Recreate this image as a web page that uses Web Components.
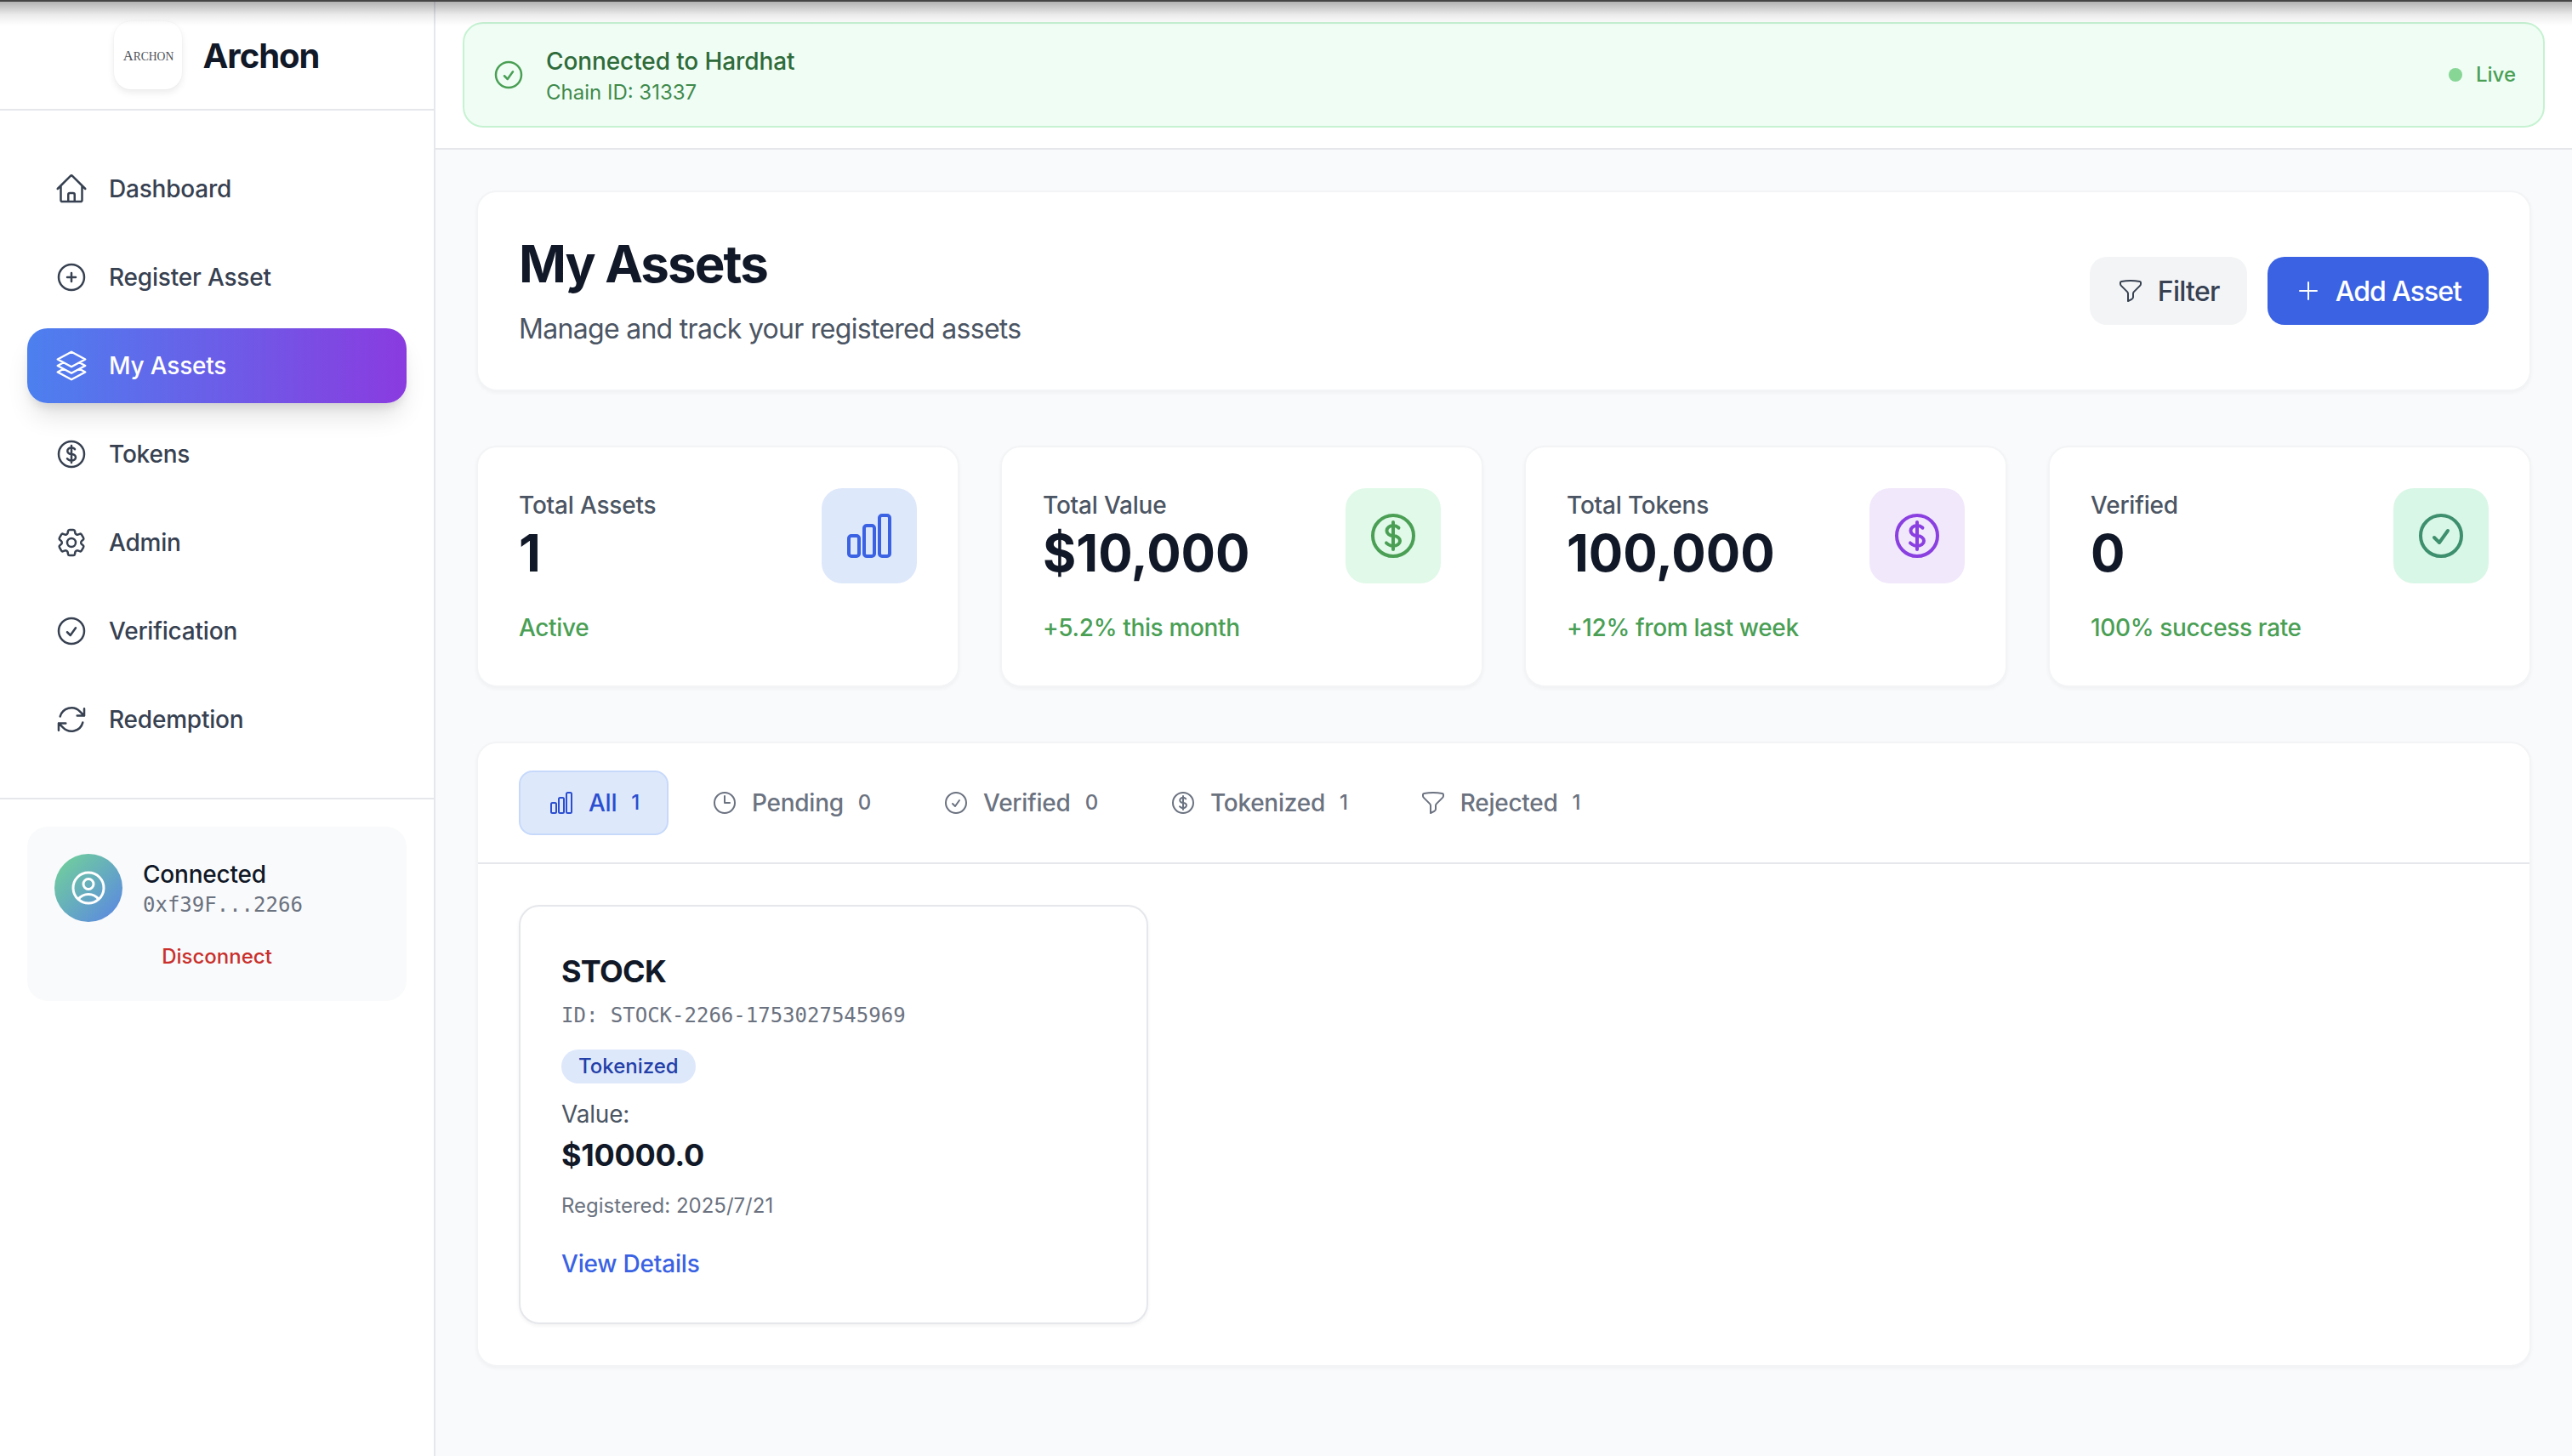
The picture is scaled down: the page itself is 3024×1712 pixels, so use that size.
<!DOCTYPE html>
<html lang="en">
<head>
<meta charset="utf-8">
<title>Archon - My Assets</title>
<style>
  html, body { margin: 0; height: 100%; }
  body {
    background: #f9fafb;
    color: #111827;
    font-family: Inter, "Liberation Sans", sans-serif;
    overflow: hidden;
  }
</style>
</head>
<body>
<app-shell>
  <side-bar slot="side">
    <nav-item icon="home">Dashboard</nav-item>
    <nav-item icon="plusCircle">Register Asset</nav-item>
    <nav-item icon="stack" active>My Assets</nav-item>
    <nav-item icon="dollar">Tokens</nav-item>
    <nav-item icon="cog">Admin</nav-item>
    <nav-item icon="check">Verification</nav-item>
    <nav-item icon="refresh">Redemption</nav-item>
    <wallet-card slot="footer" address="0xf39F...2266"></wallet-card>
  </side-bar>

  <network-banner slot="top" name="Connected to Hardhat" chain="Chain ID: 31337"></network-banner>

  <page-header title-text="My Assets" subtitle="Manage and track your registered assets">
    <action-button icon="funnel">Filter</action-button>
    <action-button icon="plus" primary>Add Asset</action-button>
  </page-header>

  <stat-grid>
    <stat-card label="Total Assets" value="1" note="Active" icon="chart" tint="#dee8fb" ink="#3a62e3"></stat-card>
    <stat-card label="Total Value" value="$10,000" note="+5.2% this month" icon="dollar" tint="#e1f9e8" ink="#4a9f55"></stat-card>
    <stat-card label="Total Tokens" value="100,000" note="+12% from last week" icon="dollar" tint="#f1e8fc" ink="#8a3fe0"></stat-card>
    <stat-card label="Verified" value="0" note="100% success rate" icon="check" tint="#d9f7e6" ink="#3d8f6d"></stat-card>
  </stat-grid>

  <asset-panel>
    <tab-item slot="tabs" icon="chart" count="1" active>All</tab-item>
    <tab-item slot="tabs" icon="clock" count="0">Pending</tab-item>
    <tab-item slot="tabs" icon="check" count="0">Verified</tab-item>
    <tab-item slot="tabs" icon="dollar" count="1">Tokenized</tab-item>
    <tab-item slot="tabs" icon="funnel" count="1">Rejected</tab-item>
    <asset-card type="STOCK" asset-id="ID: STOCK-2266-1753027545969" status="Tokenized" value="$10000.0" registered="Registered: 2025/7/21"></asset-card>
  </asset-panel>
</app-shell>

<script>
const ICONS = {
  home: "m2.25 12 8.954-8.955c.44-.439 1.152-.439 1.591 0L21.75 12M4.5 9.75v10.125c0 .621.504 1.125 1.125 1.125H9.75v-4.875c0-.621.504-1.125 1.125-1.125h2.25c.621 0 1.125.504 1.125 1.125V21h4.125c.621 0 1.125-.504 1.125-1.125V9.75M8.25 21h8.25",
  plusCircle: "M12 9v6m3-3H9m12 0a9 9 0 1 1-18 0 9 9 0 0 1 18 0Z",
  stack: "M6.429 9.75 2.25 12l4.179 2.25m0-4.5 5.571 3 5.571-3m-11.142 0L2.25 7.5 12 2.25l9.75 5.25-4.179 2.25m0 0L21.75 12l-4.179 2.25m0 0 4.179 2.25L12 21.75 2.25 16.5l4.179-2.25m11.142 0-5.571 3-5.571-3",
  dollar: "M12 6v12m-3-2.818.879.659c1.171.879 3.07.879 4.242 0 1.172-.879 1.172-2.303 0-3.182C13.536 12.219 12.768 12 12 12c-.725 0-1.45-.22-2.003-.659-1.106-.879-1.106-2.303 0-3.182s2.9-.879 4.006 0l.415.33M21 12a9 9 0 1 1-18 0 9 9 0 0 1 18 0Z",
  cog: "M9.594 3.94c.09-.542.56-.94 1.11-.94h2.593c.55 0 1.02.398 1.11.94l.213 1.281c.063.374.313.686.645.87.074.04.147.083.22.127.325.196.72.257 1.075.124l1.217-.456a1.125 1.125 0 0 1 1.37.49l1.296 2.247a1.125 1.125 0 0 1-.26 1.431l-1.003.827c-.293.241-.438.613-.43.992a7.723 7.723 0 0 1 0 .255c-.008.378.137.75.43.991l1.004.827c.424.35.534.955.26 1.43l-1.298 2.247a1.125 1.125 0 0 1-1.369.491l-1.217-.456c-.355-.133-.75-.072-1.076.124a6.47 6.47 0 0 1-.22.128c-.331.183-.581.495-.644.869l-.213 1.281c-.09.543-.56.94-1.11.94h-2.594c-.55 0-1.019-.398-1.11-.94l-.213-1.281c-.062-.374-.312-.686-.644-.87a6.52 6.52 0 0 1-.22-.127c-.325-.196-.72-.257-1.076-.124l-1.217.456a1.125 1.125 0 0 1-1.369-.49l-1.297-2.247a1.125 1.125 0 0 1 .26-1.431l1.004-.827c.292-.24.437-.613.43-.991a6.932 6.932 0 0 1 0-.255c.007-.38-.138-.751-.43-.992l-1.004-.827a1.125 1.125 0 0 1-.26-1.43l1.297-2.247a1.125 1.125 0 0 1 1.37-.491l1.216.456c.356.133.751.072 1.076-.124.072-.044.146-.086.22-.128.332-.183.582-.495.644-.869l.214-1.28ZM15 12a3 3 0 1 1-6 0 3 3 0 0 1 6 0Z",
  check: "M9 12.75 11.25 15 15 9.75M21 12a9 9 0 1 1-18 0 9 9 0 0 1 18 0Z",
  refresh: "M16.023 9.348h4.992v-.001M2.985 19.644v-4.992m0 0h4.992m-4.993 0 3.181 3.183a8.25 8.25 0 0 0 13.803-3.7M4.031 9.865a8.25 8.25 0 0 1 13.803-3.7l3.181 3.182m0-4.991v4.99",
  chart: "M3 13.125C3 12.504 3.504 12 4.125 12h2.25c.621 0 1.125.504 1.125 1.125v6.75C7.5 20.496 6.996 21 6.375 21h-2.25A1.125 1.125 0 0 1 3 19.875v-6.75ZM9.75 8.625c0-.621.504-1.125 1.125-1.125h2.25c.621 0 1.125.504 1.125 1.125v11.25c0 .621-.504 1.125-1.125 1.125h-2.25a1.125 1.125 0 0 1-1.125-1.125V8.625ZM16.5 4.125c0-.621.504-1.125 1.125-1.125h2.25C20.496 3 21 3.504 21 4.125v15.75c0 .621-.504 1.125-1.125 1.125h-2.25a1.125 1.125 0 0 1-1.125-1.125V4.125Z",
  clock: "M12 6v6h4.5m4.5 0a9 9 0 1 1-18 0 9 9 0 0 1 18 0Z",
  funnel: "M12 3c2.755 0 5.455.232 8.083.678.533.09.917.556.917 1.096v1.044a2.25 2.25 0 0 1-.659 1.591l-5.432 5.432a2.25 2.25 0 0 0-.659 1.591v2.927a2.25 2.25 0 0 1-1.244 2.013L9.75 21v-6.568a2.25 2.25 0 0 0-.659-1.591L3.659 7.409A2.25 2.25 0 0 1 3 5.818V4.774c0-.54.384-1.006.917-1.096A48.32 48.32 0 0 1 12 3Z",
  plus: "M12 4.5v15m7.5-7.5h-15",
  user: "M17.982 18.725A7.488 7.488 0 0 0 12 15.75a7.488 7.488 0 0 0-5.982 2.975m11.963 0a9 9 0 1 0-11.963 0m11.963 0A8.966 8.966 0 0 1 12 21a8.966 8.966 0 0 1-5.982-2.275M15 9.75a3 3 0 1 1-6 0 3 3 0 0 1 6 0Z"
};

const CARD_STYLE = `
  background: white;
  border: 2px solid #f3f4f6;
  border-radius: 24px;
  box-shadow: 0 2px 4px rgba(0, 0, 0, 0.04);
  box-sizing: border-box;
`;

// small helper, every element below does the same three lines
function define(name, html) {
  customElements.define(name, class extends HTMLElement {
    connectedCallback() {
      if (this.shadowRoot) return;
      const attrs = (key) => this.getAttribute(key) || "";
      this.attachShadow({ mode: "open" }).innerHTML = typeof html === "function" ? html(attrs) : html;
    }
  });
}

define("hero-icon", (a) => `
  <style>
    :host { display: block; flex: none; width: ${a("size") || 40}px; height: ${a("size") || 40}px; }
    svg { display: block; width: 100%; height: 100%; }
  </style>
  <svg viewBox="0 0 24 24" fill="none" stroke="currentColor" stroke-width="1.5" stroke-linecap="round" stroke-linejoin="round">
    <path d="${ICONS[a("name")]}"></path>
  </svg>
`);

define("app-shell", `
  <style>
    :host { display: block; position: relative; height: 100vh; background: #f9fafb; }
    .edge { height: 2px; background: #444; }
    .frame { display: grid; grid-template-columns: 512px 1fr; height: calc(100% - 2px); }
    .topbar { background: white; border-bottom: 2px solid #e5e7eb; padding: 24px 32px; }
    main { padding: 48px; display: flex; flex-direction: column; gap: 64px; min-width: 0; }
    .shade {
      position: absolute; left: 0; right: 0; top: 2px; height: 28px; pointer-events: none;
      background: linear-gradient(to bottom, rgba(0, 0, 0, 0.3), rgba(0, 0, 0, 0.08) 55%, rgba(0, 0, 0, 0));
    }
  </style>
  <div class="edge"></div>
  <div class="frame">
    <slot name="side"></slot>
    <div>
      <div class="topbar"><slot name="top"></slot></div>
      <main><slot></slot></main>
    </div>
  </div>
  <div class="shade"></div>
`);

define("side-bar", `
  <style>
    :host { display: block; background: white; border-right: 2px solid #e5e7eb; box-sizing: border-box; }
    header {
      display: flex; align-items: center; justify-content: center; gap: 24px;
      height: 128px; box-sizing: border-box; border-bottom: 2px solid #e5e7eb;
    }
    .logo {
      width: 80px; height: 80px; border-radius: 20px; background: white;
      box-shadow: 0 4px 8px rgba(0, 0, 0, 0.08), 0 0 2px rgba(0, 0, 0, 0.05);
      display: flex; align-items: baseline; justify-content: center; box-sizing: border-box; padding-top: 31px;
      font: 13.6px/20px "Liberation Serif", serif; color: #4f5359;
    }
    .logo b { font-size: 16.6px; font-weight: 400; }
    h1 { margin: 0; font-size: 40px; font-weight: 700; letter-spacing: -1px; color: #111827; }
    nav { display: flex; flex-direction: column; gap: 16px; padding: 48px 32px; }
    footer { border-top: 2px solid #e5e7eb; padding: 32px; }
  </style>
  <header><div class="logo"><b>A</b>RCHON</div><h1>Archon</h1></header>
  <nav><slot></slot></nav>
  <footer><slot name="footer"></slot></footer>
`);

define("nav-item", (a) => `
  <style>
    :host {
      display: flex; align-items: center; gap: 24px; height: 88px; padding: 0 32px;
      box-sizing: border-box; border-radius: 24px; color: #374151;
      font-size: 28px; font-weight: 500; line-height: 40px; letter-spacing: -0.2px;
    }
    :host([active]) {
      color: white;
      background: linear-gradient(to right, #4c80ef, #8a3be0);
      box-shadow: 0 20px 30px -6px rgba(0, 0, 0, 0.12), 0 8px 12px -4px rgba(0, 0, 0, 0.1);
    }
  </style>
  <hero-icon name="${a("icon")}" size="40"></hero-icon>
  <slot></slot>
`);

define("wallet-card", (a) => `
  <style>
    :host { display: block; background: #f9fafb; border-radius: 24px; padding: 32px 32px 36px; }
    .row { display: flex; align-items: center; gap: 24px; }
    .avatar {
      width: 80px; height: 80px; border-radius: 50%; color: white;
      background: linear-gradient(135deg, #72d596, #5a84e6);
      display: flex; align-items: center; justify-content: center;
    }
    .who { font-size: 28px; font-weight: 500; line-height: 40px; color: #111827; letter-spacing: -0.2px; }
    .addr { font: 24px/32px "DejaVu Sans Mono", monospace; color: #6b7280; }
    .out { margin-top: 25px; text-align: center; font-size: 24px; font-weight: 500; line-height: 32px; color: #c9302c; }
  </style>
  <div class="row">
    <div class="avatar"><hero-icon name="user" size="48"></hero-icon></div>
    <div><div class="who">Connected</div><div class="addr">${a("address")}</div></div>
  </div>
  <div class="out">Disconnect</div>
`);

define("network-banner", (a) => `
  <style>
    :host {
      display: flex; align-items: center; gap: 24px; padding: 24px 32px;
      background: #f0fdf4; border: 2px solid #c6f2d2; border-radius: 24px; box-sizing: border-box;
      color: #4a9f55;
    }
    .text { flex: 1; }
    .name { font-size: 28px; font-weight: 500; line-height: 40px; color: #2f6b3a; letter-spacing: -0.1px; }
    .chain { font-size: 24px; line-height: 32px; padding-top: 1px; margin-bottom: -1px; color: #3f8a4c; }
    .live { display: flex; align-items: center; gap: 16px; font-size: 24px; font-weight: 500; line-height: 32px; }
    .dot { width: 16px; height: 16px; border-radius: 50%; background: #87d696; }
  </style>
  <hero-icon name="check" size="40"></hero-icon>
  <div class="text"><div class="name">${a("name")}</div><div class="chain">${a("chain")}</div></div>
  <div class="live"><span class="dot"></span>Live</div>
`);

define("page-header", (a) => `
  <style>
    :host { ${CARD_STYLE} display: flex; align-items: center; justify-content: space-between; padding: 48px; }
    h2 { margin: 0; font-size: 60px; line-height: 72px; font-weight: 700; color: #111827; letter-spacing: -1.9px; }
    p { margin: 17px 0 0; font-size: 32px; line-height: 47px; color: #4b5563; letter-spacing: -0.7px; }
    .actions { display: flex; gap: 24px; }
  </style>
  <div><h2>${a("title-text")}</h2><p>${a("subtitle")}</p></div>
  <div class="actions"><slot></slot></div>
`);

define("action-button", (a) => `
  <style>
    :host {
      display: flex; align-items: center; gap: 16px; height: 80px; padding: 0 32px;
      box-sizing: border-box; border-radius: 20px;
      font-size: 32px; font-weight: 500; letter-spacing: -0.7px; background: #f3f4f6; color: #374151;
    }
    :host([primary]) { background: #3a62e3; color: white; letter-spacing: -1px; }
  </style>
  <hero-icon name="${a("icon")}" size="32"></hero-icon>
  <slot></slot>
`);

define("stat-grid", `
  <style>
    :host { display: grid; grid-template-columns: repeat(4, 1fr); gap: 48px; }
  </style>
  <slot></slot>
`);

define("stat-card", (a) => `
  <style>
    :host { ${CARD_STYLE} display: block; padding: 48px; }
    .top { display: flex; justify-content: space-between; align-items: flex-start; height: 112px; }
    .label { font-size: 28px; font-weight: 500; line-height: 40px; color: #4b5563; letter-spacing: -0.2px; }
    .value { font-size: 60px; font-weight: 700; line-height: 72px; color: #111827; }
    .tile {
      width: 112px; height: 112px; border-radius: 24px; background: ${a("tint")}; color: ${a("ink")};
      display: flex; align-items: center; justify-content: center;
    }
    .note { margin-top: 32px; font-size: 28px; font-weight: 500; line-height: 40px; color: #4a9f55; letter-spacing: -0.35px; }
  </style>
  <div class="top">
    <div><div class="label">${a("label")}</div><div class="value">${a("value")}</div></div>
    <div class="tile"><hero-icon name="${a("icon")}" size="64"></hero-icon></div>
  </div>
  <div class="note">${a("note")}</div>
`);

define("asset-panel", `
  <style>
    :host { ${CARD_STYLE} display: block; }
    .tabs { display: flex; gap: 16px; padding: 32px 48px; border-bottom: 2px solid #e5e7eb; }
    .grid { display: grid; grid-template-columns: repeat(3, 1fr); gap: 48px; padding: 48px; }
  </style>
  <div class="tabs"><slot name="tabs"></slot></div>
  <div class="grid"><slot></slot></div>
`);

define("tab-item", (a) => `
  <style>
    :host {
      display: flex; align-items: center; gap: 16px; padding: 16px 32px;
      border: 2px solid transparent; border-radius: 16px; box-sizing: border-box;
      font-size: 28px; font-weight: 500; line-height: 40px; letter-spacing: -0.25px; color: #6b7280;
    }
    :host([active]) { background: #dee8fb; border-color: #c6d9fb; color: #2b4fd0; }
    .count { font-size: 24px; margin-left: 1px; }
  </style>
  <hero-icon name="${a("icon")}" size="32"></hero-icon>
  <slot></slot>
  <span class="count">${a("count")}</span>
`);

define("asset-card", (a) => `
  <style>
    :host {
      display: block; background: white; border: 2px solid #e5e7eb; border-radius: 24px;
      padding: 48px 48px 49px; box-shadow: 0 2px 4px rgba(0, 0, 0, 0.05);
    }
    h3 { margin: 0; font-size: 36px; line-height: 56px; font-weight: 700; color: #111827; letter-spacing: -0.7px; }
    .id { margin-top: 8px; font: 24px/32px "DejaVu Sans Mono", monospace; color: #6b7280; }
    .badge {
      display: inline-block; margin-top: 24px; padding: 4px 20px; border-radius: 20px;
      background: #dee8fb; color: #2340a8; font-size: 24px; font-weight: 500; line-height: 32px;
    }
    .label { margin-top: 16px; font-size: 28px; line-height: 40px; color: #4b5563; letter-spacing: -0.2px; }
    .amount { font-size: 36px; font-weight: 700; line-height: 56px; color: #111827; letter-spacing: -0.3px; }
    .date { margin-top: 16px; font-size: 24px; line-height: 32px; color: #6b7280; }
    .link { margin-top: 32px; font-size: 28px; font-weight: 500; line-height: 40px; color: #3a62e3; letter-spacing: -0.2px; }
  </style>
  <h3>${a("type")}</h3>
  <div class="id">${a("asset-id")}</div>
  <div class="badge">${a("status")}</div>
  <div class="label">Value:</div>
  <div class="amount">${a("value")}</div>
  <div class="date">${a("registered")}</div>
  <div class="link">View Details</div>
`);
</script>
</body>
</html>
